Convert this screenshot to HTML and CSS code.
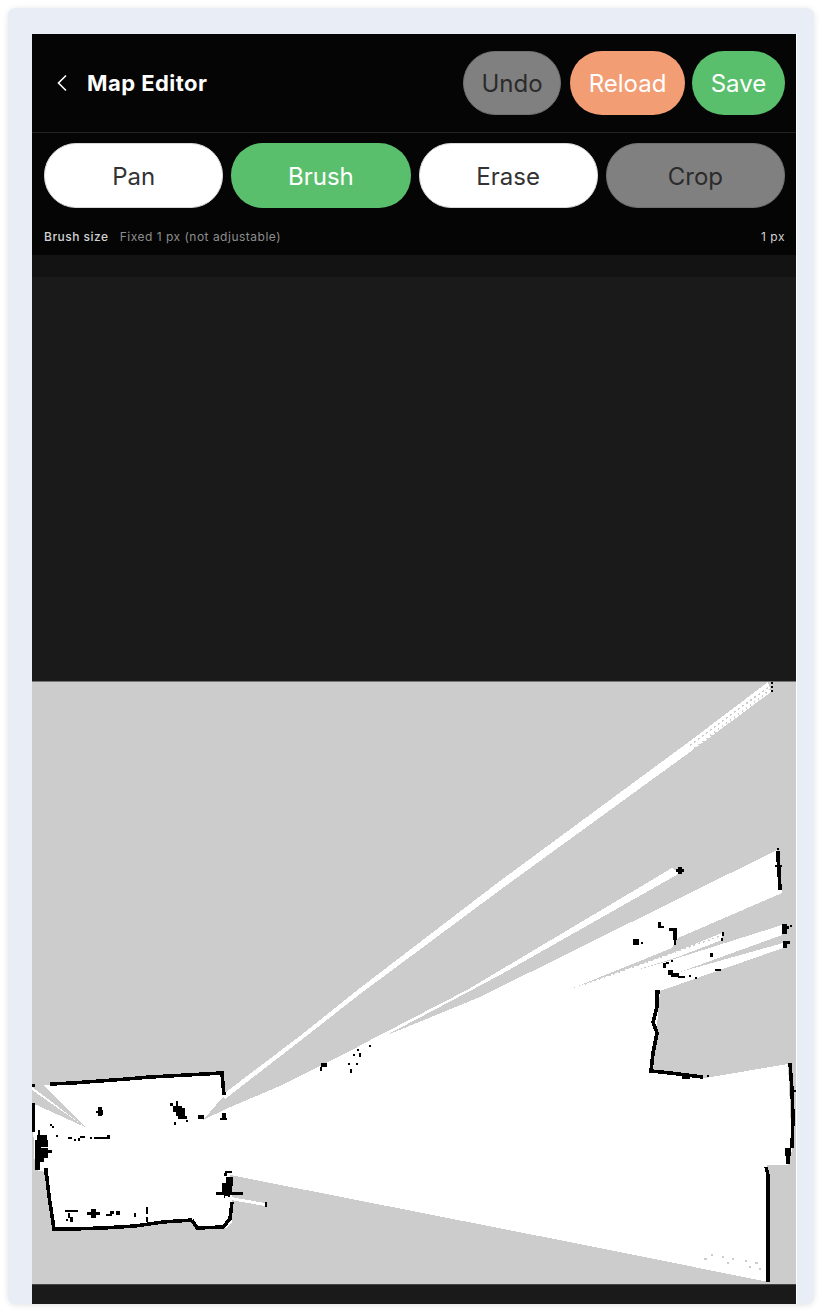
FILE: index.html
```html
<!DOCTYPE html>
<html lang="en">
<head>
<meta charset="utf-8">
<title>Map Editor</title>
<link rel="stylesheet" href="styles.css">
</head>
<body>
<div class="frame">
  <main class="app">
    <header class="topbar">
      <div class="title-group">
        <svg class="back" viewBox="0 0 12 18" width="12" height="18"><path d="M10 1.5 2.5 9 10 16.5"/></svg>
        <h1 class="title">Map Editor</h1>
      </div>
      <div class="actions">
        <button class="pill pill-head pill-off undo">Undo</button>
        <button class="pill pill-head pill-orange reload">Reload</button>
        <button class="pill pill-head pill-green save">Save</button>
      </div>
    </header>
    <section class="tools">
      <div class="tool-row">
        <button class="pill pill-tool pill-white">Pan</button>
        <button class="pill pill-tool pill-green">Brush</button>
        <button class="pill pill-tool pill-white">Erase</button>
        <button class="pill pill-tool pill-off">Crop</button>
      </div>
      <div class="size-row">
        <span class="size-label">Brush size</span>
        <span class="size-note">Fixed 1 px (not adjustable)</span>
        <span class="size-value">1 px</span>
      </div>
    </section>
    <div class="strip"></div>
    <div class="void"></div>
    <svg class="map" viewBox="32 682 764 602" width="764" height="602">
      <rect class="m-grey" x="32" y="682" width="764" height="602"/>
      <polygon class="m-white" points="43,1085 222,1073 223,1097 203,1120 228,1108 280,1086 358,1047 480,997 777,850 782,893 678,938 672,948 573,988 665,962 680,972 783,943 783,948 660,991 653,1072 705,1078 788,1064 792,1150 788,1165 767,1165 768,1282 620,1252 230,1175 232,1200 232,1222 227,1228 197,1228 192,1220 53,1231 45,1172 35,1170 32,1103 85,1127"/>
      <polygon class="m-white" points="665,962 782,925 782,935 680,972"/>
      <polygon class="m-white" points="576,987 675,952 722,933 722,940 675,958 585,986"/>
      <polygon class="m-white" points="222,1095 300,1036 360,988 500,881 690,741 768,682 771,692 690,752 500,890 360,994 300,1041 225,1099"/>
      <polygon class="m-white" points="357,1047 467,990 672,868 680,873 500,975 400,1028 360,1049"/>
      <polygon class="m-white" points="32,1087 85,1127 32,1090"/>
      <line class="m-dots" x1="690" y1="745" x2="770" y2="686"/>
      <line class="m-dots" x1="694" y1="748" x2="770" y2="690"/>
      <line class="m-dots" x1="585" y1="984" x2="720" y2="936"/>
      <g class="m-wall">
        <polyline points="50,1084 73,1083 100,1081 127,1079 150,1077 187,1075 222,1073 224,1095"/>
        <polyline points="33,1103 33,1132"/>
        <polyline points="46,1170 49,1196 54,1229 72,1229 103,1228 135,1226 163,1222 192,1220"/>
        <polyline points="192,1220 197,1228 223,1227 230,1219 232,1202"/>
        <polyline points="657,992 657,1007 653,1022 657,1033 653,1053 651,1071 670,1073 703,1077"/>
        <polyline points="790,1063 792,1090 793,1117 792,1148"/>
        <polyline points="766,1167 768,1175 768,1282"/>
        <polyline points="778,851 780,890"/>
      </g>
      <g class="m-black">
        <rect x="32" y="1084" width="3" height="3"/>
        <rect x="785" y="1148" width="6" height="8"/>
        <rect x="786" y="1155" width="4" height="9"/>
        <rect x="776" y="852" width="4" height="10"/>
        <rect x="775" y="865" width="7" height="2"/>
        <rect x="222" y="1113" width="4" height="7"/>
        <rect x="220" y="1118" width="7" height="2"/>
        <rect x="38" y="1130" width="2" height="5"/>
        <rect x="37" y="1135" width="10" height="5"/>
        <rect x="35" y="1140" width="6" height="18"/>
        <rect x="41" y="1140" width="7" height="7"/>
        <rect x="41" y="1148" width="7" height="10"/>
        <rect x="48" y="1150" width="4" height="3"/>
        <rect x="35" y="1158" width="9" height="4"/>
        <rect x="35" y="1162" width="5" height="8"/>
        <rect x="44" y="1168" width="4" height="7"/>
        <rect x="98" y="1107" width="4" height="9"/>
        <rect x="100" y="1110" width="3" height="5"/>
        <rect x="96" y="1111" width="3" height="2"/>
        <rect x="176" y="1106" width="6" height="10"/>
        <rect x="170" y="1103" width="3" height="3"/>
        <rect x="173" y="1106" width="4" height="6"/>
        <rect x="182" y="1108" width="3" height="8"/>
        <rect x="178" y="1116" width="9" height="3"/>
        <rect x="176" y="1101" width="2" height="5"/>
        <rect x="174" y="1122" width="2" height="3"/>
        <rect x="186" y="1120" width="2" height="2"/>
        <rect x="198" y="1115" width="6" height="4"/>
        <rect x="50" y="1124" width="2" height="2"/>
        <rect x="52" y="1126" width="2" height="2"/>
        <rect x="56" y="1135" width="2" height="2"/>
        <rect x="68" y="1137" width="4" height="2"/>
        <rect x="74" y="1139" width="2" height="2"/>
        <rect x="78" y="1138" width="2" height="3"/>
        <rect x="80" y="1136" width="5" height="2"/>
        <rect x="90" y="1137" width="2" height="2"/>
        <rect x="94" y="1137" width="16" height="2"/>
        <rect x="107" y="1135" width="3" height="2"/>
        <rect x="65" y="1210" width="13" height="2"/>
        <rect x="68" y="1213" width="2" height="5"/>
        <rect x="70" y="1217" width="3" height="5"/>
        <rect x="66" y="1219" width="2" height="2"/>
        <rect x="87" y="1212" width="13" height="3"/>
        <rect x="91" y="1209" width="5" height="9"/>
        <rect x="106" y="1214" width="6" height="2"/>
        <rect x="110" y="1211" width="4" height="3"/>
        <rect x="116" y="1211" width="4" height="4"/>
        <rect x="134" y="1213" width="2" height="4"/>
        <rect x="146" y="1207" width="2" height="7"/>
        <rect x="146" y="1217" width="2" height="5"/>
        <rect x="225" y="1171" width="7" height="2"/>
        <rect x="224" y="1173" width="3" height="3"/>
        <rect x="226" y="1177" width="7" height="9"/>
        <rect x="222" y="1183" width="10" height="9"/>
        <rect x="216" y="1192" width="27" height="3"/>
        <rect x="224" y="1195" width="6" height="3"/>
        <rect x="265" y="1202" width="2" height="5"/>
        <rect x="676" y="869" width="8" height="3"/>
        <rect x="678" y="867" width="4" height="7"/>
        <rect x="658" y="922" width="3" height="6"/>
        <rect x="661" y="926" width="3" height="2"/>
        <rect x="669" y="928" width="8" height="3"/>
        <rect x="673" y="931" width="4" height="9"/>
        <rect x="674" y="940" width="2" height="5"/>
        <rect x="633" y="939" width="6" height="6"/>
        <rect x="641" y="942" width="2" height="2"/>
        <rect x="722" y="932" width="2" height="4"/>
        <rect x="721" y="938" width="2" height="3"/>
        <rect x="782" y="924" width="5" height="10"/>
        <rect x="787" y="926" width="2" height="3"/>
        <rect x="790" y="925" width="2" height="2"/>
        <rect x="783" y="941" width="7" height="3"/>
        <rect x="783" y="944" width="4" height="4"/>
        <rect x="710" y="953" width="3" height="4"/>
        <rect x="715" y="969" width="6" height="2"/>
        <rect x="663" y="963" width="3" height="5"/>
        <rect x="666" y="962" width="3" height="2"/>
        <rect x="671" y="960" width="2" height="2"/>
        <rect x="668" y="970" width="5" height="5"/>
        <rect x="671" y="973" width="8" height="4"/>
        <rect x="678" y="976" width="7" height="2"/>
        <rect x="689" y="975" width="2" height="2"/>
        <rect x="695" y="977" width="2" height="2"/>
        <rect x="655" y="990" width="5" height="4"/>
        <rect x="321" y="1063" width="6" height="4"/>
        <rect x="320" y="1067" width="2" height="4"/>
        <rect x="348" y="1063" width="2" height="2"/>
        <rect x="356" y="1063" width="2" height="2"/>
        <rect x="350" y="1069" width="2" height="4"/>
        <rect x="353" y="1054" width="2" height="2"/>
        <rect x="359" y="1053" width="2" height="4"/>
        <rect x="357" y="1049" width="2" height="2"/>
        <rect x="369" y="1045" width="2" height="2"/>
        <rect x="771" y="682" width="2" height="2"/>
        <rect x="771" y="686" width="2" height="2"/>
        <rect x="771" y="690" width="2" height="2"/>
        <rect x="707" y="1075" width="2" height="2"/>
        <rect x="794" y="1090" width="2" height="2"/>
        <rect x="777" y="848" width="2" height="2"/>
        <rect x="682" y="1075" width="8" height="4"/>
      </g>
      <polygon class="m-white" points="225,1196 265,1203 265,1206 225,1199"/>
      <g class="m-faint">
        <rect x="704" y="1258" width="3" height="2"/>
        <rect x="711" y="1254" width="2" height="2"/>
        <rect x="722" y="1256" width="2" height="2"/>
        <rect x="727" y="1262" width="2" height="2"/>
        <rect x="732" y="1258" width="2" height="2"/>
        <rect x="745" y="1260" width="2" height="2"/>
        <rect x="749" y="1266" width="2" height="2"/>
        <rect x="755" y="1262" width="3" height="2"/>
        <rect x="759" y="1268" width="2" height="2"/>
      </g>
    </svg>
    <div class="footer"></div>
  </main>
</div>
</body>
</html>
```
FILE: styles.css
```css
* { box-sizing: border-box; }
html, body { height: 100%; }
body {
  margin: 0;
  padding: 8px;
  background: #fff;
  font-family: Inter, "Liberation Sans", sans-serif;
}
.frame {
  height: 1296px;
  padding: 26px 17px 0 24px;
  background: #e9edf6;
  border-radius: 8px;
  box-shadow: 0 1px 6px rgba(0, 0, 0, .12);
}
.app {
  height: 100%;
  width: 765px;
  background: #050505;
  border-right: 1px solid #fff;
  display: flex;
  flex-direction: column;
}
.topbar {
  height: 99px;
  flex: none;
  padding: 17px 11px 18px 12px;
  display: flex;
  align-items: center;
  justify-content: space-between;
  border-bottom: 1px solid #222;
}
.title-group {
  display: flex;
  align-items: center;
  gap: 19px;
  padding-left: 12px;
}
.back { display: block; }
.back path { fill: none; stroke: #fff; stroke-width: 1.6; }
.title {
  margin: 0;
  font-size: 22px;
  font-weight: 700;
  letter-spacing: .45px;
  color: #fff;
}
.actions { display: flex; gap: 8px; }
.pill {
  border-radius: 32px;
  font-family: inherit;
  font-size: 24px;
  font-weight: 400;
  line-height: 28px;
  display: flex;
  align-items: center;
  justify-content: center;
  padding: 2px 0 0;
  border: 1px solid transparent;
}
.pill-head { height: 64px; }
.undo { width: 98px; }
.reload { width: 115px; margin: 0 -1px 0 1px; }
.save { width: 93px; }
.pill-off { background: #808080; color: #2b2b2b; border-color: #707070; }
.pill-orange { background: #f39d75; color: #fff; }
.pill-green { background: #5abf6d; color: #fff; }
.pill-white { background: #fff; color: #333; border-color: #d8d8d8; }
.tools {
  flex: none;
  height: 122px;
  padding: 10px 11px 0 12px;
}
.tool-row {
  display: grid;
  grid-template-columns: repeat(4, 1fr);
  gap: 8px;
}
.pill-tool { height: 65px; }
.size-row {
  margin-top: 22px;
  display: flex;
  align-items: center;
  font-size: 12px;
  line-height: 14px;
  letter-spacing: .5px;
}
.size-label { color: #d2d2d2; font-weight: 500; }
.size-note { color: #8e8e8e; margin-left: 11px; }
.size-value { color: #d2d2d2; margin-left: auto; }
.strip { height: 22px; flex: none; background: #131313; }
.void { flex: 1; background: #1a1a1a; border-bottom: 1px solid #777; }
.map { display: block; flex: none; shape-rendering: crispEdges; }
.m-grey { fill: #ccc; }
.m-white { fill: #fff; }
.m-dots { stroke: #ccc; stroke-width: 1.5; stroke-dasharray: 2 3; }
.m-wall polyline { fill: none; stroke: #000; stroke-width: 3.6; }
.m-black rect { fill: #000; }
.m-faint rect { fill: #ccc; }
.footer { height: 20px; flex: none; background: #1a1a1a; border-top: 1px solid #444; }
```
